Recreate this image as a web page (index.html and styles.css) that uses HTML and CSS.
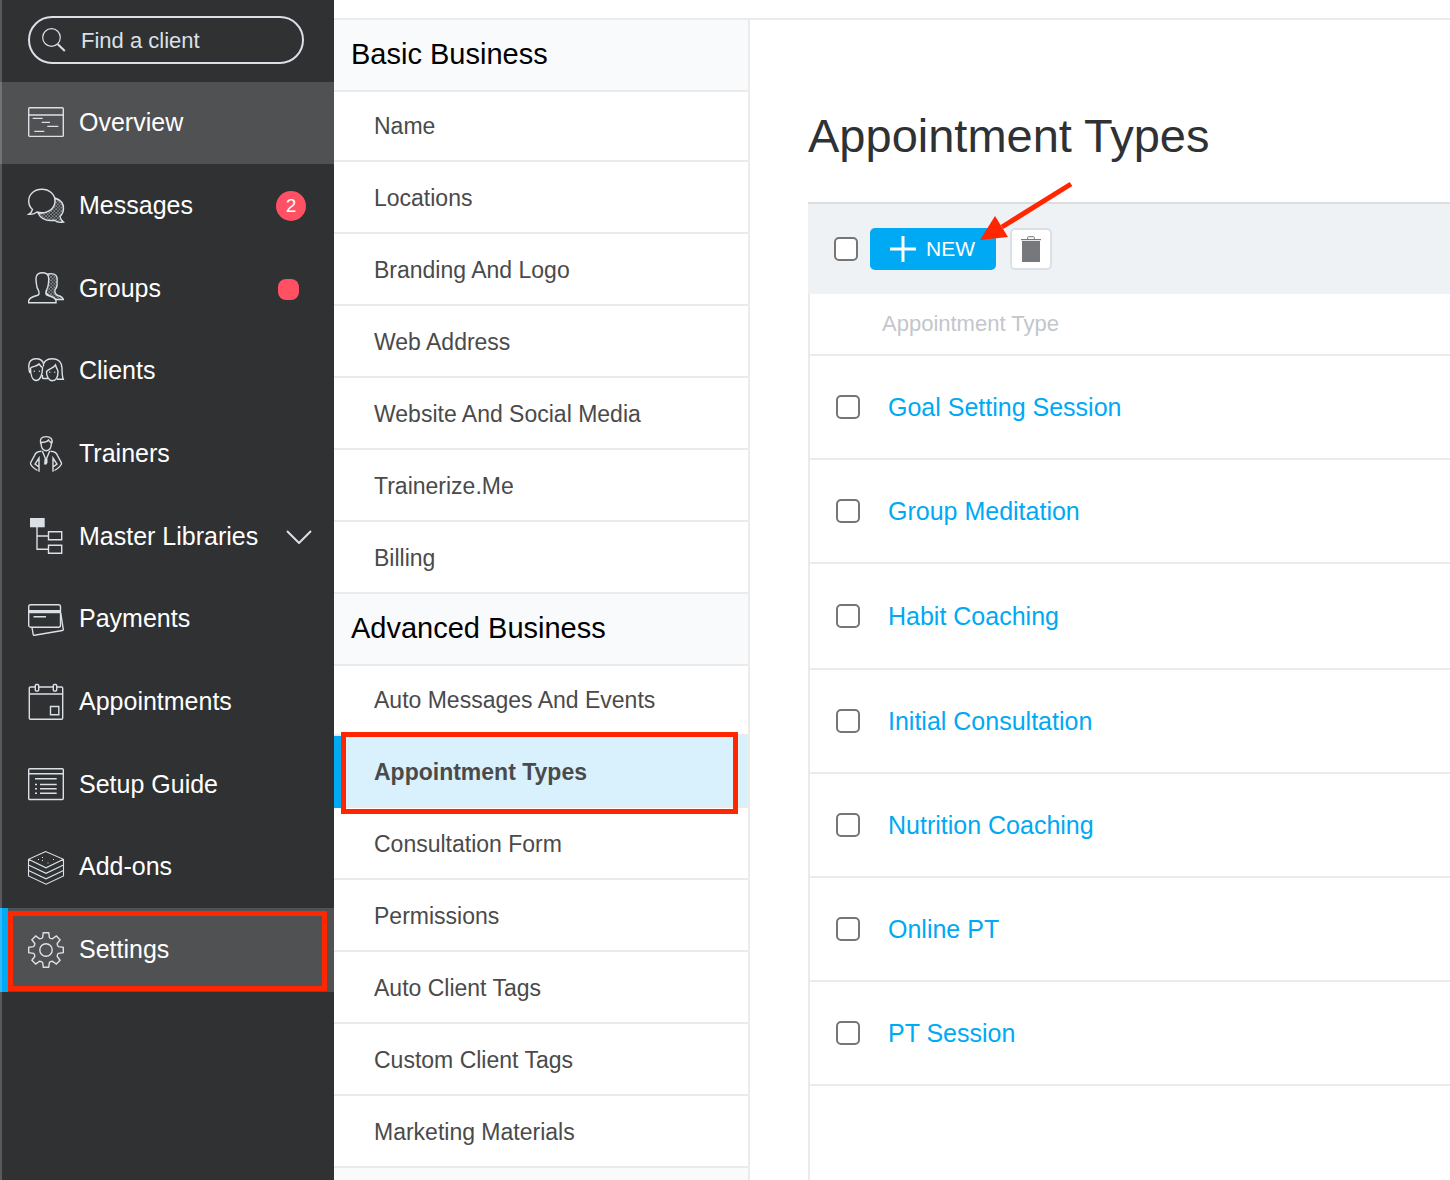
FILE: index.html
```
<!DOCTYPE html>
<html lang="en">
<head>
    <meta charset="UTF-8">
    <meta name="viewport" content="width=device-width, initial-scale=1.0">
    <title>Appointment Types</title>
    <link rel="stylesheet" href="styles.css">
</head>
<body>
    <aside class="sidebar">
        <label class="search">
            <svg class="search-icon" viewBox="0 0 24 24"><circle cx="9.5" cy="9.5" r="8.8"/><path class="handle" d="M15.8 16.2 22.8 23"/></svg>
            <input type="text" placeholder="Find a client" aria-label="Find a client">
        </label>

        <nav class="nav">
            <a href="#" class="nav-item active">
                <svg class="icon" viewBox="0 0 36 36"><rect x=".7" y="2.8" width="34.6" height="28.6" rx="1"/><path d="M.7 10h34.6M4.7 13.4h10M13.7 17.4H22M19.3 21.4h11M6.3 26.4h10"/></svg>
                <span class="nav-text">Overview</span>
            </a>
            <a href="#" class="nav-item">
                <svg class="icon" viewBox="0 0 36 36">
                    <defs>
                        <pattern id="dots" width="3.4" height="3.4" patternUnits="userSpaceOnUse"><circle class="solid" cx=".9" cy=".9" r=".7"/><circle class="solid" cx="2.6" cy="2.6" r=".7"/></pattern>
                    </defs>
                    <path fill="url(#dots)" d="M27 10c5.800 2 8.500 6 8.500 10.300 0 3.700-1.500 6.200-3.500 8.200.3 2.500 1.500 4 3.500 5.500-3.500.8-7 0-9-1.800C19 33.500 13 31 10 25c10 1 17-6 17-15z"/>
                    <path class="front" d="M4.500 21.500C1.500 19 .7 16 .7 13 .7 6 6.500 1.200 13.800 1.200S27 6 27 13s-6 11.800-13.200 11.800c-1.800 0-3.300-.3-4.800-.8-2.500 1.800-5.500 2.600-8.300 2.300C3 25 4 23.500 4.500 21.500z"/>
                </svg>
                <span class="nav-text">Messages</span>
                <span class="badge">2</span>
            </a>
            <a href="#" class="nav-item">
                <svg class="icon" viewBox="0 0 36 36">
                    <path fill="url(#dots)" d="M20 3c7.500-1.500 10 2 9 8 .5 3-.5 6-2 7.500-.5 3.500 0 5 3 6 3.500 1 5 2 5.300 4H27L18 22z"/>
                    <path class="front" d="M.7 31.700v-2.200c.8-2.500 4.300-4 8.300-5 2.500-.5 2.500-2.500 1.500-5-1.500-2-2-4.500-2.200-7.500-.8-4-1-10.300 6.200-10.300S21 8 20.500 12c-.2 3-1 5.500-2.200 7.500-.8 2.500-.8 4.500 1.700 5 4 1 7.500 2.500 8 5v2.200z"/>
                </svg>
                <span class="nav-text">Groups</span>
                <span class="dot"></span>
            </a>
            <a href="#" class="nav-item">
                <svg class="icon" viewBox="0 0 36 36">
                    <path d="M2.500 15c0 7 2 12.500 5.700 12.500s6.300-5.500 6.300-12.500M1.800 20C-.5 12 1 5.700 8 5.700c4 0 7 2 7.500 5.300M2.500 15c2.500-2 6.500-1.500 8.500-4 1.500 2 2.500 3 4 4"/>
                    <path d="M15.500 13.500C15 8.500 19 5.700 24 5.700c7 0 10 4.300 10 9.300s0 8 1.300 11.300H29M18.500 18.500c0 5.500 2.500 9.300 5.800 9.300 3.700 0 5.700-3.800 5.700-9.800-1-2-2-4-2.500-6-2.500 3.500-6.500 3.500-9 6.500zM14.500 22c-.3 2 0 3 .5 3.500h5"/>
                    <path d="M5.800 18.200h1M10.800 18.200h1M21.300 19.200h1M26.300 19.200h1"/>
                </svg>
                <span class="nav-text">Clients</span>
            </a>
            <a href="#" class="nav-item">
                <svg class="icon" viewBox="0 0 36 36">
                    <path d="M13 6.500c0 5 2 8.200 5.200 8.200s5.200-3.200 5.200-8.200M12.600 7.500C11.500 3 13.500.6 18 .6c5 0 7 2.700 5.700 7M13 6.500c3 0 6-.5 7.500-2.500.8 1.500 2 2 3 3"/>
                    <path d="M13.500 15.300c-3.500.2-6 1.200-7 4.200L2.500 27c-.5 1.500 2.500 5 7 7.500M11 35.700V22l-4 6 4 3M22.500 15.300c3.500.2 6 1.200 7 4.200l4 7.500c.5 1.500-2.500 5-7 7.500M25 35.700V22l4 6-4 3"/>
                    <path d="m14.300 15 3.700 9 3.700-9"/><path class="solid" d="M16.500 23h3v3.500l-1 2h-2.500z"/>
                </svg>
                <span class="nav-text">Trainers</span>
            </a>
            <a href="#" class="nav-item">
                <svg class="icon" viewBox="0 0 36 36"><path class="solid" d="M2-1h14.700v9.300H2z"/><path d="M9 8v22.300h11.500M9 17h11.500M20.500 12.700h13.200v8.100H20.500zM20.500 26.300h13.200v8H20.500z"/></svg>
                <span class="nav-text">Master Libraries</span>
                <svg class="chevron" viewBox="0 0 26 14"><path d="m1 1 12 12L25 1"/></svg>
            </a>
            <a href="#" class="nav-item">
                <svg class="icon" viewBox="0 0 36 36"><rect x=".7" y="3.700" width="31.800" height="22.500" rx="2"/><path class="solid" d="M.7 9h31.800v3.200H.7z"/><path d="M5.500 15.800H18M4 26.500l1.200 7c.1.600.6.900 1.200.8l28-4.800c.6-.1 1-.6.900-1.200L32.700 12"/></svg>
                <span class="nav-text">Payments</span>
            </a>
            <a href="#" class="nav-item">
                <svg class="icon" viewBox="0 0 36 36"><path d="M7 3H2.500Q1.300 3 1.300 4.200v30q0 1.100 1.200 1.100h31q1.200 0 1.200-1.200V4.200Q34.700 3 33.500 3H29M11 3h14M1.300 10h33.400M22.500 22.500h8.300v8.300h-8.300z"/><rect x="7.300" y=".5" width="3.400" height="6.500" rx="1"/><rect x="25.300" y=".5" width="3.400" height="6.500" rx="1"/></svg>
                <span class="nav-text">Appointments</span>
            </a>
            <a href="#" class="nav-item">
                <svg class="icon" viewBox="0 0 36 36"><rect x=".7" y="1.700" width="34.600" height="30.800" rx="1"/><path d="M.7 6.800h34.600M7 11.700h21.700M12 17.500h16.700M12 21.800h16.700M12 26.300h16.700M7 17.500h2M7 21.800h2M7 26.300h2"/></svg>
                <span class="nav-text">Setup Guide</span>
            </a>
            <a href="#" class="nav-item">
                <svg class="icon thin" viewBox="0 0 36 36"><path d="M17.700 2.500.5 10.300V27l17.500 8.200L35.500 27V10.300zM.5 10.300 18 18.800l17.500-8.500M.5 15.900 18 24.300l17.500-8.400M.5 21.400 18 29.800l17.500-8.400M14 8.500h1M10 10.500h1M14 11.500h1M25 10.500h1M19.500 14h1"/></svg>
                <span class="nav-text">Add-ons</span>
            </a>
            <a href="#" class="nav-item active current">
                <svg class="icon" viewBox="0 0 36 36"><path d="M15.300.7h5.400l.7 4.800Q22 6.800 24.400 6.800l3.900-2.900 3.800 3.800-2.900 3.900q0 2.400 1.300 3l4.800.7v5.400l-4.800.7q-1.300.6-1.300 3l2.900 3.900-3.800 3.800-3.900-2.900q-2.400 0-3 1.300l-.7 4.800h-5.400l-.7-4.800q-.6-1.300-3-1.300l-3.900 2.900-3.800-3.800 2.900-3.900q0-2.400-1.300-3L.7 20.700v-5.400l4.800-.7q1.300-.6 1.300-3L3.900 7.700l3.800-3.800 3.900 2.900q2.400 0 3-1.300z"/><circle cx="18" cy="18" r="6.200"/></svg>
                <span class="nav-text">Settings</span>
                <span class="highlight"></span>
            </a>
        </nav>
    </aside>

    <div class="page">
        <header class="topbar"></header>
        <div class="columns">
            <nav class="menu">
                <h2 class="menu-title">Basic Business</h2>
                <ul class="menu-list">
                    <li><a href="#">Name</a></li>
                    <li><a href="#">Locations</a></li>
                    <li><a href="#">Branding And Logo</a></li>
                    <li><a href="#">Web Address</a></li>
                    <li><a href="#">Website And Social Media</a></li>
                    <li><a href="#">Trainerize.Me</a></li>
                    <li><a href="#">Billing</a></li>
                </ul>
                <h2 class="menu-title">Advanced Business</h2>
                <ul class="menu-list">
                    <li><a href="#">Auto Messages And Events</a></li>
                    <li class="selected"><a href="#">Appointment Types</a><span class="highlight"></span></li>
                    <li><a href="#">Consultation Form</a></li>
                    <li><a href="#">Permissions</a></li>
                    <li><a href="#">Auto Client Tags</a></li>
                    <li><a href="#">Custom Client Tags</a></li>
                    <li><a href="#">Marketing Materials</a></li>
                </ul>
            </nav>

            <main class="content">
                <h1>Appointment Types</h1>
                <div class="toolbar">
                    <input type="checkbox" aria-label="Select all">
                    <div class="new-wrap">
                        <button type="button" class="btn-new">
                            <svg class="plus" viewBox="0 0 26 26"><path d="M13 0v26M0 13h26"/></svg>
                            NEW
                        </button>
                        <svg class="arrow" viewBox="0 0 94 62"><path class="shaft" d="M91 4 22 47"/><path class="head" d="M0 60 15 36l13 21z"/></svg>
                    </div>
                    <button type="button" class="btn-delete" aria-label="Delete">
                        <svg class="trash" viewBox="0 0 20 26"><path d="M1 5h18v21H1z"/><path d="M0 3h20v1.200H0z"/><path class="lid" d="M6.700 3V1.500q0-.8.8-.8h5q.8 0 .8.800V3"/></svg>
                    </button>
                </div>
                <div class="table-wrap">
                    <table class="types">
                        <thead>
                            <tr><th class="check"></th><th>Appointment Type</th></tr>
                        </thead>
                        <tbody>
                            <tr><td class="check"><input type="checkbox" aria-label="Goal Setting Session"></td><td><a href="#">Goal Setting Session</a></td></tr>
                            <tr><td class="check"><input type="checkbox" aria-label="Group Meditation"></td><td><a href="#">Group Meditation</a></td></tr>
                            <tr><td class="check"><input type="checkbox" aria-label="Habit Coaching"></td><td><a href="#">Habit Coaching</a></td></tr>
                            <tr><td class="check"><input type="checkbox" aria-label="Initial Consultation"></td><td><a href="#">Initial Consultation</a></td></tr>
                            <tr><td class="check"><input type="checkbox" aria-label="Nutrition Coaching"></td><td><a href="#">Nutrition Coaching</a></td></tr>
                            <tr><td class="check"><input type="checkbox" aria-label="Online PT"></td><td><a href="#">Online PT</a></td></tr>
                            <tr><td class="check"><input type="checkbox" aria-label="PT Session"></td><td><a href="#">PT Session</a></td></tr>
                        </tbody>
                    </table>
                </div>
            </main>
        </div>
    </div>
</body>
</html>
```
FILE: styles.css
```
* {
    margin: 0;
    padding: 0;
    box-sizing: border-box;
}
body {
    display: flex;
    height: 100vh;
    overflow: hidden;
    font-family: "Liberation Sans", Arial, sans-serif;
    background: #fff;
    color: #2f3133;
}
a {
    color: inherit;
    text-decoration: none;
}
input[type="checkbox"] {
    appearance: none;
    display: block;
    width: 24px;
    height: 24px;
    border: 2px solid #767676;
    border-radius: 5px;
    background: #fff;
}

/* Sidebar */
.sidebar {
    position: relative;
    flex: 0 0 334px;
    padding-top: 16px;
    background: #2f3133;
    color: #fff;
}
.sidebar::before {
    content: '';
    position: absolute;
    top: 0;
    bottom: 0;
    left: 0;
    width: 2px;
    background: rgba(255, 255, 255, 0.2);
    z-index: 1;
}
.search {
    display: flex;
    align-items: center;
    gap: 15px;
    height: 48px;
    margin: 0 30px 18px 28px;
    padding: 0 12px;
    border: 2px solid #dbe0e7;
    border-radius: 24px;
}
.search-icon {
    flex: none;
    width: 24px;
    height: 24px;
    fill: none;
    stroke: #dbe0e7;
    stroke-width: 1.2;
}
.search-icon .handle {
    stroke-width: 2;
}
.search input {
    width: 100%;
    padding-top: 2px;
    border: none;
    background: none;
    font: 22px "Liberation Sans", Arial, sans-serif;
    color: #dbe0e7;
    outline: none;
}
.search input::placeholder {
    color: #dbe0e7;
    opacity: 1;
}
.nav-item {
    position: relative;
    display: flex;
    align-items: center;
    gap: 15px;
    height: 82px;
    padding: 0 28px;
    font-size: 25px;
    line-height: 30px;
    white-space: nowrap;
}
.nav-item:nth-child(3n+2) {
    height: 84px;
}
.nav-item.active {
    background: #505153;
}
.nav-item.current::before {
    content: '';
    position: absolute;
    top: 0;
    bottom: 0;
    left: 0;
    width: 8px;
    background: #00a9f4;
}
.nav-text {
    padding-bottom: 2px;
}
.icon {
    flex: none;
    width: 36px;
    height: 36px;
    overflow: visible;
    fill: none;
    stroke: #dbe0e7;
    stroke-width: 1.4;
}
.icon.thin {
    stroke-width: 1.1;
}
.icon .solid {
    fill: #dbe0e7;
    stroke: none;
}
.icon .front {
    fill: #2f3133;
}
.badge {
    width: 30px;
    height: 30px;
    margin-left: auto;
    border-radius: 50%;
    background: #ff5064;
    font-size: 19px;
    text-align: center;
}
.dot {
    width: 21px;
    height: 21px;
    margin: 0 7px 0 auto;
    border-radius: 8px;
    background: #ff5064;
}
.chevron {
    width: 26px;
    height: 14px;
    margin: 0 -6px 0 auto;
    fill: none;
    stroke: #dbe0e7;
    stroke-width: 2;
}

/* Red callout frames */
.highlight {
    position: absolute;
    border: 5px solid #ff2600;
}
.nav-item .highlight {
    top: 3px;
    right: 7px;
    bottom: 1px;
    left: 8px;
}
.selected .highlight {
    top: -4px;
    right: 10px;
    bottom: -8px;
    left: 7px;
    z-index: 1;
}

/* Page */
.page {
    flex: 1;
    display: flex;
    flex-direction: column;
    min-width: 0;
}
.topbar {
    flex: none;
    height: 20px;
    border-bottom: 2px solid #ebebeb;
}
.columns {
    flex: 1;
    display: flex;
    min-height: 0;
}

/* Settings menu */
.menu {
    flex: 0 0 416px;
    border-right: 2px solid #ebebeb;
    background: #f9fafc;
}
.menu-title {
    height: 72px;
    padding-left: 17px;
    border-bottom: 2px solid #ebebeb;
    font-size: 29px;
    font-weight: normal;
    line-height: 68px;
    color: #000;
}
.menu-list {
    list-style: none;
}
.menu-list li {
    position: relative;
    height: 72px;
    border-bottom: 2px solid #ebebeb;
    background: #fff;
    font-size: 23px;
    line-height: 72px;
    color: #4a4a4a;
}
.menu-list li:first-child {
    height: 70px;
    line-height: 68px;
}
.menu-list a {
    display: block;
    padding-left: 40px;
}
.menu-list .selected {
    background: #d9f1fd;
    font-weight: bold;
}
.menu-list .selected::before {
    content: '';
    position: absolute;
    top: 0;
    bottom: -2px;
    left: 0;
    width: 8px;
    background: #00a9f4;
}

/* Content */
.content {
    flex: 1;
    display: flex;
    flex-direction: column;
    min-width: 0;
    padding: 88px 0 0 58px;
}
h1 {
    margin-bottom: 38px;
    font-size: 47px;
    font-weight: normal;
    line-height: 56px;
}
.toolbar {
    display: flex;
    align-items: center;
    height: 92px;
    padding-left: 26px;
    border-top: 2px solid #dcdddf;
    background: #eff2f5;
}
.new-wrap {
    position: relative;
    margin: 0 14px 0 12px;
}
.btn-new {
    display: flex;
    align-items: center;
    gap: 10px;
    width: 126px;
    height: 42px;
    padding-left: 20px;
    border: none;
    border-radius: 5px;
    background: #00a9f4;
    color: #fff;
    font: 21px "Liberation Sans", Arial, sans-serif;
}
.plus {
    width: 26px;
    height: 26px;
    stroke: #fff;
    stroke-width: 3;
}
.btn-delete {
    display: flex;
    align-items: center;
    justify-content: center;
    width: 42px;
    height: 42px;
    border: 2px solid #dbe0e7;
    border-radius: 5px;
    background: #fff;
}
.trash {
    width: 20px;
    height: 26px;
    fill: #77787b;
}
.trash .lid {
    fill: none;
    stroke: #77787b;
}
.arrow {
    position: absolute;
    top: -48px;
    left: 110px;
    width: 94px;
    height: 62px;
}
.arrow .shaft {
    stroke: #ff2600;
    stroke-width: 5;
}
.arrow .head {
    fill: #ff2600;
}
.table-wrap {
    flex: 1;
    border-left: 2px solid #ebebeb;
}
.types {
    width: 100%;
    border-spacing: 0;
}
.types tr {
    height: 104px;
}
.types thead tr {
    height: 62px;
}
.types tbody tr:nth-child(3) {
    height: 106px;
}
.types th,
.types td {
    border-bottom: 2px solid #ebebeb;
}
.types th {
    font-size: 22px;
    font-weight: normal;
    text-align: left;
    color: #c3c6cb;
}
.types td {
    padding-left: 6px;
    font-size: 25px;
    color: #00a9f4;
}
.types .check {
    width: 72px;
    padding-left: 26px;
}
```
